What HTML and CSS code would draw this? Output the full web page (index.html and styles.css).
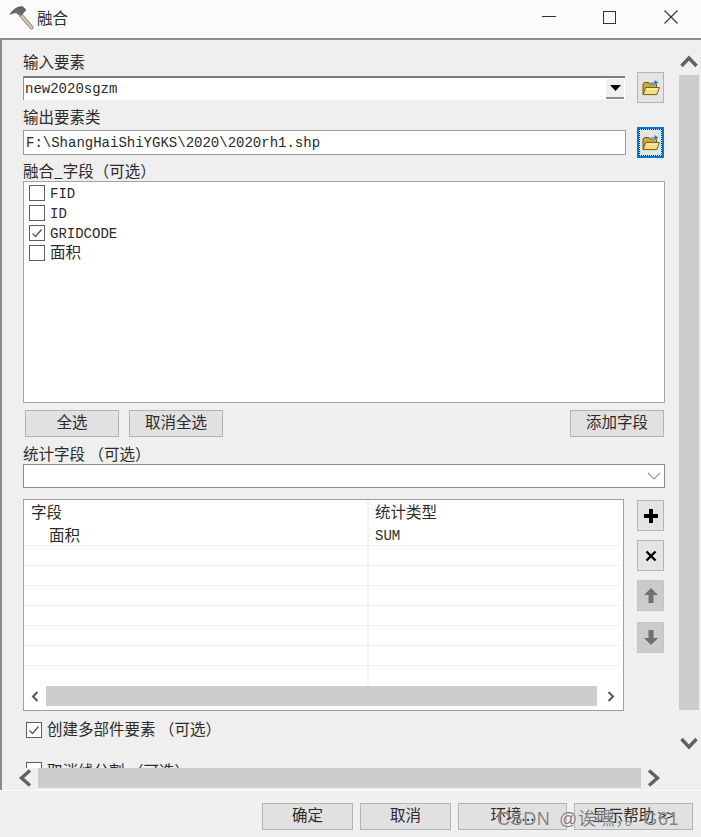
FILE: index.html
```html
<!DOCTYPE html>
<html lang="zh-CN">
<head>
<meta charset="utf-8">
<title>融合</title>
<link rel="stylesheet" href="styles.css">
</head>
<body>
<svg class="sprites" width="0" height="0" aria-hidden="true">
  <defs>
    <symbol id="folder" viewBox="0 0 18 17">
      <path d="M1 6.5V15.5H14.5V5H8L7 3.5H2.5L1 5Z" fill="#c9a93c" stroke="#6e5712" stroke-width="1"/>
      <path d="M1.2 15.6L3.6 8.5H17.5L14.8 15.6Z" fill="#f3dc82" stroke="#7a6116" stroke-width="1"/>
      <path d="M4.5 10H15.5" stroke="#fff3b8" stroke-width="1"/>
      <path d="M9 3.2H12.5V0.8L16.5 3.6L12.5 6.4V4.6H9Z" fill="#2f6fb5" stroke="#b9d4ee" stroke-width=".5"/>
    </symbol>
    <symbol id="check" viewBox="0 0 14 14">
      <path d="M2.5 7.5L5.6 10.5L11.5 3.5" fill="none" stroke="#555" stroke-width="1.3"/>
    </symbol>
  </defs>
</svg>
<div class="window">
  <header class="titlebar">
    <svg class="hammer" width="26" height="26" viewBox="0 0 26 26">
      <path d="M11 8L23.5 22.5" stroke="#8f8468" stroke-width="4" stroke-linecap="round"/>
      <path d="M11 8L23.5 22.5" stroke="#d6cdb4" stroke-width="2.2" stroke-linecap="round"/>
      <path d="M2 9.5C4.5 5 9 1.5 14.5 1.5L18 5L13 10.5L10 8C7 7.6 4.5 8 2 9.5Z" fill="#62676a" stroke="#4a4e51" stroke-width=".6"/>
    </svg>
    <span class="title-text">融合</span>
    <div class="win-controls">
      <div class="win-btn"><span class="win-min"></span></div>
      <div class="win-btn"><span class="win-max"></span></div>
      <div class="win-btn">
        <svg width="14" height="14" viewBox="0 0 14 14"><path d="M.5.5L13.5 13.5M13.5.5L.5 13.5" stroke="#333" stroke-width="1.1"/></svg>
      </div>
    </div>
  </header>

  <div class="workspace">
    <main class="pane">
      <div class="path-row">
        <div class="path-col">
          <div class="label">输入要素</div>
          <div class="combo-sunken">
            <span class="mono">new2020sgzm</span>
            <span class="combo-drop"><svg width="11" height="6" viewBox="0 0 11 6"><path d="M0 0H11L5.5 6Z" fill="#000"/></svg></span>
          </div>
        </div>
        <button class="btn-icon"><svg width="18" height="17"><use href="#folder"/></svg></button>
      </div>

      <div class="path-row path-row-second">
        <div class="path-col">
          <div class="label">输出要素类</div>
          <div class="text-input"><span class="mono">F:\ShangHaiShiYGKS\2020\2020rh1.shp</span></div>
        </div>
        <button class="btn-icon btn-focus"><svg width="18" height="17"><use href="#folder"/></svg></button>
      </div>

      <div class="label label-tight label-fields">融合_字段（可选）</div>
      <div class="field-list">
        <div class="check-row"><span class="checkbox"></span><span class="mono mono-item">FID</span></div>
        <div class="check-row"><span class="checkbox"></span><span class="mono mono-item">ID</span></div>
        <div class="check-row"><span class="checkbox"><svg width="14" height="14"><use href="#check"/></svg></span><span class="mono mono-item">GRIDCODE</span></div>
        <div class="check-row"><span class="checkbox"></span><span class="cjk-item">面积</span></div>
      </div>

      <div class="list-actions">
        <button class="btn btn-list">全选</button>
        <button class="btn btn-list">取消全选</button>
        <button class="btn btn-list btn-push">添加字段</button>
      </div>

      <div class="label label-tight label-stats">统计字段 （可选）</div>
      <div class="select">
        <svg width="14" height="8" viewBox="0 0 14 8"><path d="M1 1L7 7L13 1" fill="none" stroke="#9a9a9a" stroke-width="1.2"/></svg>
      </div>

      <div class="stats-row">
        <div class="stats-table">
          <div class="t-row t-head"><div class="t-c1 t-h1">字段</div><div class="t-c2">统计类型</div></div>
          <div class="t-row t-first"><div class="t-c1 t-indent">面积</div><div class="t-c2 mono t-sum">SUM</div></div>
          <div class="t-row t-line"><div class="t-c1"></div><div class="t-c2"></div></div>
          <div class="t-row t-line"><div class="t-c1"></div><div class="t-c2"></div></div>
          <div class="t-row t-line"><div class="t-c1"></div><div class="t-c2"></div></div>
          <div class="t-row t-line"><div class="t-c1"></div><div class="t-c2"></div></div>
          <div class="t-row t-line"><div class="t-c1"></div><div class="t-c2"></div></div>
          <div class="t-row t-line"><div class="t-c1"></div><div class="t-c2"></div></div>
          <div class="t-row t-fill"><div class="t-c1"></div><div class="t-c2"></div></div>
          <div class="t-scroll">
            <svg width="8" height="11" viewBox="0 0 8 11"><path d="M6.5 1L2 5.5L6.5 10" fill="none" stroke="#555" stroke-width="2"/></svg>
            <span class="t-thumb"></span>
            <svg width="8" height="11" viewBox="0 0 8 11"><path d="M1.5 1L6 5.5L1.5 10" fill="none" stroke="#555" stroke-width="2"/></svg>
          </div>
        </div>
        <div class="side-btns">
          <button class="btn-icon btn-side"><svg width="16" height="16" viewBox="0 0 16 16"><path d="M8 1V15M1 8H15" stroke="#000" stroke-width="4"/></svg></button>
          <button class="btn-icon btn-side"><svg width="12" height="12" viewBox="0 0 12 12"><path d="M1.5 1.5L10.5 10.5M10.5 1.5L1.5 10.5" stroke="#000" stroke-width="2.4"/></svg></button>
          <button class="btn-icon btn-side btn-off"><svg width="14" height="15" viewBox="0 0 14 15"><path d="M7 0L14 7H9.5V15H4.5V7H0Z" fill="#707070"/></svg></button>
          <button class="btn-icon btn-side btn-off btn-last"><svg width="14" height="15" viewBox="0 0 14 15"><path d="M7 15L14 8H9.5V0H4.5V8H0Z" fill="#707070"/></svg></button>
        </div>
      </div>

      <div class="option-row option-first"><span class="checkbox"><svg width="14" height="14"><use href="#check"/></svg></span><span class="cjk-item">创建多部件要素 （可选）</span></div>
      <div class="option-row option-second"><span class="checkbox"></span><span class="cjk-item cjk-clipped">取消线分割 （可选）</span></div>
    </main>

    <aside class="vscroll">
      <svg width="18" height="13" viewBox="0 0 18 13"><path d="M1.5 11L9 3L16.5 11" fill="none" stroke="#606060" stroke-width="3.4"/></svg>
      <span class="v-thumb"></span>
      <svg class="v-down" width="18" height="13" viewBox="0 0 18 13"><path d="M1.5 2L9 10L16.5 2" fill="none" stroke="#606060" stroke-width="3.4"/></svg>
    </aside>

    <div class="hscroll">
      <svg width="14" height="18" viewBox="0 0 14 18"><path d="M12 1.5L3.5 9L12 16.5" fill="none" stroke="#606060" stroke-width="3.4"/></svg>
      <span class="h-thumb"></span>
      <svg width="14" height="18" viewBox="0 0 14 18"><path d="M2 1.5L10.5 9L2 16.5" fill="none" stroke="#606060" stroke-width="3.4"/></svg>
    </div>
  </div>

  <footer class="footer">
    <button class="btn btn-ok">确定</button>
    <button class="btn btn-ok">取消</button>
    <button class="btn btn-env">环境...</button>
    <button class="btn btn-help">显示帮助 &gt;&gt;</button>
  </footer>
  <div class="watermark">CSDN @诶嘿，。G61</div>
</div>
</body>
</html>
```
FILE: styles.css
```css
* { box-sizing: border-box; }
html, body { margin: 0; padding: 0; }
body {
  width: 701px;
  height: 837px;
  overflow: hidden;
  background: #f0f0f0;
  color: #2b2b2b;
  font-family: "Noto Sans CJK SC", "Liberation Sans", sans-serif;
  font-size: 15.5px;
}
.sprites { position: absolute; }
.window {
  position: relative;
  display: flex;
  flex-direction: column;
  width: 701px;
  height: 837px;
}
.mono {
  font-family: "Liberation Mono", "Noto Sans CJK SC", monospace;
  font-size: 14px;
}
button { font: inherit; color: inherit; padding: 0; margin: 0; }

/* title bar */
.titlebar {
  display: flex;
  align-items: center;
  height: 40px;
  flex: none;
  background: #fbfbfb;
  border-bottom: 2px solid #8c8c8c;
  padding-left: 8px;
}
.hammer { flex: none; margin-top: -2px; }
.title-text { margin-left: 3px; font-size: 15.5px; line-height: 34px; height: 38px; }
.win-controls { display: flex; margin-left: auto; }
.win-btn {
  width: 61px;
  height: 38px;
  display: flex;
  align-items: center;
  justify-content: center;
}
.win-min { display: block; width: 14px; height: 1px; background: #333; margin-top: -5px; }
.win-max { display: block; width: 13px; height: 13px; border: 1px solid #333; margin-top: -4px; }
.win-btn svg { margin-top: -4px; }

/* workspace */
.workspace {
  display: grid;
  grid-template-columns: 673px 26px;
  grid-template-rows: 728px 22px;
  height: 750px;
  flex: none;
  border-left: 2px solid #8c8c8c;
  background: #efefef;
}
.pane {
  overflow: hidden;
  padding: 12px 0 0 21px;
}
.label { height: 20px; line-height: 18px; margin-bottom: 4px; }
.label-tight { height: 19px; line-height: 17px; margin-bottom: 0; }
.label-fields { margin-top: 4px; }
.label-stats { margin-top: 8px; }

.path-row {
  display: flex;
  align-items: flex-end;
  gap: 11px;
  width: 641px;
}
.path-row-second { margin-top: 4px; }
.path-col { width: 603px; flex: none; padding-bottom: 3px; }
.path-row-second .label { margin-bottom: 3px; }

.combo-sunken {
  display: flex;
  align-items: center;
  justify-content: space-between;
  height: 24px;
  margin-right: 1px;
  background: #fff;
  border-top: 2px solid #7d7d7d;
  border-left: 1px solid #8f8f8f;
  padding-left: 1px;
}
.combo-drop {
  display: flex;
  align-items: center;
  justify-content: center;
  width: 18px;
  height: 20px;
  margin-right: 1px;
  background: #f0f0f0;
  border-bottom: 2px solid #8c8c8c;
}
.text-input {
  display: flex;
  align-items: center;
  height: 25px;
  background: #fff;
  border: 1px solid #9a9a9a;
  padding-left: 2px;
}

.btn-icon {
  display: flex;
  align-items: center;
  justify-content: center;
  width: 27px;
  height: 31px;
  flex: none;
  background: #e4e4e4;
  border: 1px solid #b4b4b4;
}
.btn-focus {
  border: 2px solid #0078d7;
  outline: 1px dotted #222;
  outline-offset: -3px;
}

/* field list */
.field-list {
  width: 642px;
  height: 222px;
  background: #fff;
  border: 1px solid #a3a3a3;
  padding: 1px 0 0 5px;
}
.check-row {
  display: flex;
  align-items: center;
  height: 20px;
  gap: 5px;
}
.checkbox {
  display: flex;
  align-items: center;
  justify-content: center;
  width: 16px;
  height: 16px;
  flex: none;
  background: #fff;
  border: 1px solid #5f5f5f;
}
.mono-item { padding-top: 2px; }
.cjk-item { font-size: 15.5px; line-height: 16px; height: 20px; }
.cjk-clipped { line-height: 20px; }

.list-actions {
  display: flex;
  gap: 10px;
  width: 642px;
  margin-top: 7px;
  padding: 0 1px 0 2px;
}
.btn {
  height: 27px;
  background: #e1e1e1;
  border: 1px solid #b4b4b4;
  line-height: 21px;
  padding-bottom: 4px;
}
.btn-list { width: 94px; }
.btn-push { margin-left: auto; }

.select {
  display: flex;
  align-items: center;
  justify-content: flex-end;
  width: 642px;
  height: 24px;
  background: #fff;
  border: 1px solid #8c8c8c;
  padding-right: 3px;
}

/* statistics table */
.stats-row {
  display: flex;
  gap: 13px;
  margin-top: 11px;
  width: 641px;
}
.stats-table {
  width: 601px;
  height: 212px;
  flex: none;
  background: #fff;
  border: 1px solid #a0a0a0;
}
.t-row { display: flex; }
.t-c1 { width: 345px; flex: none; border-right: 2px solid #f2f2f2; }
.t-c2 { flex: 1; padding-left: 6px; margin-right: 2px; }
.t-head { height: 23px; line-height: 23px; }
.t-h1 { padding-left: 7px; }
.t-first { height: 23px; line-height: 23px; border-bottom: 1px solid #f0f0f0; margin-right: 2px; }
.t-sum { line-height: 26px; }
.t-indent { padding-left: 25px; }
.t-line { height: 20px; border-bottom: 1px solid #f0f0f0; margin-right: 2px; }
.t-fill { height: 20px; }
.t-scroll {
  display: flex;
  align-items: center;
  height: 20px;
  padding-left: 7px;
}
.t-thumb {
  display: block;
  width: 551px;
  height: 20px;
  margin: 0 10px 0 7px;
  background: #cdcdcd;
}
.side-btns { display: flex; flex-direction: column; padding-top: 1px; gap: 9px; }
.btn-side { flex: none; }
.btn-off { background: #cbcbcb; border-color: #c4c4c4; }
.btn-last { margin-top: 2px; }

/* options below the table */
.option-row {
  display: flex;
  align-items: center;
  height: 20px;
  gap: 5px;
  padding-left: 3px;
}
.option-first { margin-top: 9px; }
.option-second { margin-top: 20px; }

/* outer scroll bars */
.vscroll {
  display: flex;
  flex-direction: column;
  align-items: center;
  padding-top: 15px;
  margin-right: -2px;
}
.v-thumb {
  display: block;
  width: 20px;
  height: 635px;
  margin-top: 7px;
  background: #cdcdcd;
}
.v-down { margin-top: 27px; }
.hscroll {
  grid-column: 1 / 3;
  display: flex;
  align-items: flex-start;
  gap: 6px;
  padding-left: 16px;
}
.h-thumb {
  display: block;
  width: 603px;
  height: 20px;
  background: #cdcdcd;
}
.hscroll svg { margin-top: 1px; }

/* footer */
.footer {
  display: flex;
  justify-content: flex-end;
  gap: 7px;
  height: 47px;
  flex: none;
  padding: 12px 8px 0 0;
  background: #f0f0f0;
  border-top: 1px solid #fbfbfb;
}
.btn-ok { width: 91px; }
.btn-env { width: 109px; }
.btn-help { width: 119px; }

.watermark {
  position: absolute;
  left: 497px;
  top: 807px;
  color: rgba(95, 95, 95, 0.78);
  font-family: "Liberation Sans", "Noto Sans CJK SC", sans-serif;
  font-size: 18px;
  font-weight: 400;
  line-height: 24px;
  letter-spacing: 0.6px;
  word-spacing: 3px;
  white-space: nowrap;
  text-shadow: 0 0 1px #f4f4f4;
}
```
